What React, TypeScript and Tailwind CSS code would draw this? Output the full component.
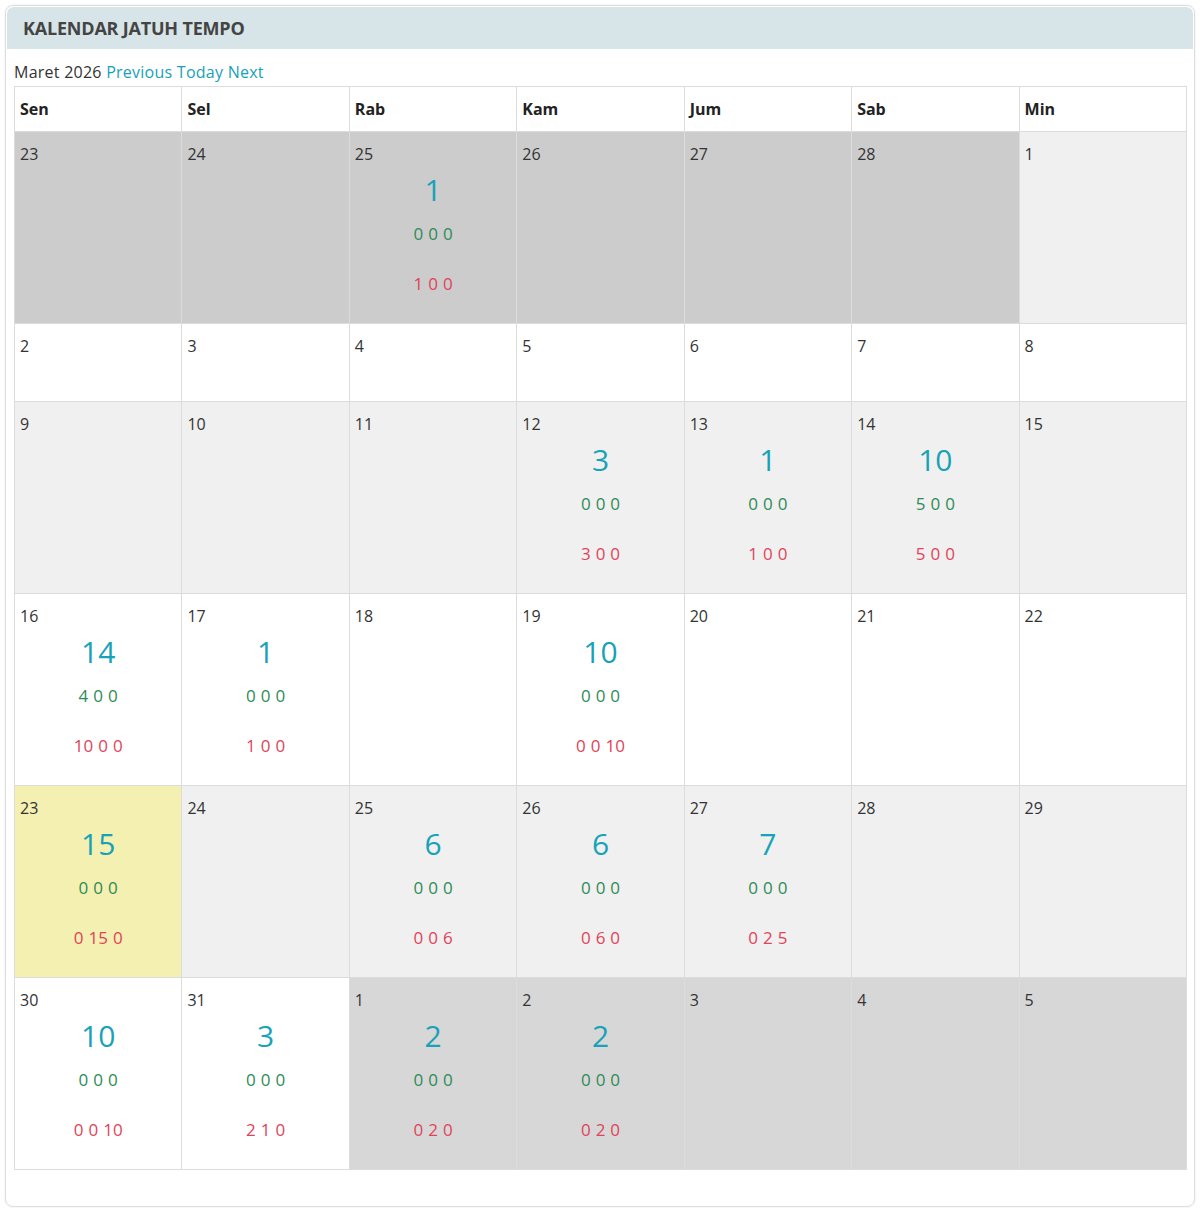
import React from "react";

type Ev = { total: number; green: number[]; red: number[] };
type Cell = { day: number; other?: boolean; today?: boolean; ev?: Ev };

const e = (total: number, green: number[], red: number[]): Ev => ({ total, green, red });

const weeks: Cell[][] = [
  [
    { day: 23, other: true },
    { day: 24, other: true },
    { day: 25, other: true, ev: e(1, [0, 0, 0], [1, 0, 0]) },
    { day: 26, other: true },
    { day: 27, other: true },
    { day: 28, other: true },
    { day: 1 },
  ],
  [{ day: 2 }, { day: 3 }, { day: 4 }, { day: 5 }, { day: 6 }, { day: 7 }, { day: 8 }],
  [
    { day: 9 },
    { day: 10 },
    { day: 11 },
    { day: 12, ev: e(3, [0, 0, 0], [3, 0, 0]) },
    { day: 13, ev: e(1, [0, 0, 0], [1, 0, 0]) },
    { day: 14, ev: e(10, [5, 0, 0], [5, 0, 0]) },
    { day: 15 },
  ],
  [
    { day: 16, ev: e(14, [4, 0, 0], [10, 0, 0]) },
    { day: 17, ev: e(1, [0, 0, 0], [1, 0, 0]) },
    { day: 18 },
    { day: 19, ev: e(10, [0, 0, 0], [0, 0, 10]) },
    { day: 20 },
    { day: 21 },
    { day: 22 },
  ],
  [
    { day: 23, today: true, ev: e(15, [0, 0, 0], [0, 15, 0]) },
    { day: 24 },
    { day: 25, ev: e(6, [0, 0, 0], [0, 0, 6]) },
    { day: 26, ev: e(6, [0, 0, 0], [0, 6, 0]) },
    { day: 27, ev: e(7, [0, 0, 0], [0, 2, 5]) },
    { day: 28 },
    { day: 29 },
  ],
  [
    { day: 30, ev: e(10, [0, 0, 0], [0, 0, 10]) },
    { day: 31, ev: e(3, [0, 0, 0], [2, 1, 0]) },
    { day: 1, other: true, ev: e(2, [0, 0, 0], [0, 2, 0]) },
    { day: 2, other: true, ev: e(2, [0, 0, 0], [0, 2, 0]) },
    { day: 3, other: true },
    { day: 4, other: true },
    { day: 5, other: true },
  ],
];

const days = ["Sen", "Sel", "Rab", "Kam", "Jum", "Sab", "Min"];

function Nums({ values, color }: { values: number[]; color: string }) {
  return (
    <div
      className={`flex justify-center gap-[5px] text-[17px] leading-[21px] ${color}`}
      style={{ fontFamily: '"Open Sans", "DejaVu Sans", sans-serif' }}
    >
      {values.map((v, i) => (
        <span key={i}>{v}</span>
      ))}
    </div>
  );
}

function CellView({ c, wi }: { c: Cell; wi: number }) {
  const striped = wi % 2 === 0;
  let bg = striped ? "bg-[#f0f0f0]" : "bg-white";
  if (c.other) bg = striped ? "bg-[#cccccc]" : "bg-[#d7d7d7]";
  if (c.today) bg = "bg-[#f3f0b1]";
  return (
    <div className={`${bg} border-r border-b border-[#dcdcdc] min-h-[78px] pt-[10px] px-[5px]`}>
      <div className="text-[16px] leading-[24px] text-[#333]">{c.day}</div>
      {c.ev && (
        <div className="pb-[29px]">
          <div className="mt-[6px] text-center text-[30px] leading-[36px] text-[#17a2b8]">{c.ev.total}</div>
          <div className="mt-[15px]">
            <Nums values={c.ev.green} color="text-[#2e8b57]" />
          </div>
          <div className="mt-[29px]">
            <Nums values={c.ev.red} color="text-[#e0435a]" />
          </div>
        </div>
      )}
    </div>
  );
}

export default function App() {
  return (
    <div className="bg-white min-h-[1212px] p-[5px]" style={{ fontFamily: '"Open Sans", "Noto Sans", sans-serif' }}>
      <div className="border border-[#dedede] rounded-[8px] shadow-[0_0_2px_rgba(0,0,0,0.12)] overflow-hidden pb-[36px]">
        <div className="bg-[#d7e4e8] h-[42px] mt-[1px] mx-[1px] rounded-t-[7px] flex items-center px-[16px]">
          <h2 className="text-[18px] font-bold text-[#444] tracking-[-0.2px]">KALENDAR JATUH TEMPO</h2>
        </div>
        <div className="pl-[8px] pr-[7px] pt-[11px]">
          <div className="text-[16px] leading-[24px] text-[#333] mb-[2px] tracking-[0.25px]">
            Maret 2026{" "}
            <a className="text-[#17a2b8]">Previous</a> <a className="text-[#17a2b8]">Today</a>{" "}
            <a className="text-[#17a2b8]">Next</a>
          </div>
          <div className="grid grid-cols-7 border-l border-t border-[#dcdcdc]">
            {days.map((d) => (
              <div
                key={d}
                className="h-[45px] border-r border-b border-[#dcdcdc] px-[5px] flex items-center text-[16px] font-bold text-[#222] bg-white"
              >
                {d}
              </div>
            ))}
            {weeks.map((w, wi) => w.map((c, ci) => <CellView key={`${wi}-${ci}`} c={c} wi={wi} />))}
          </div>
        </div>
      </div>
    </div>
  );
}
